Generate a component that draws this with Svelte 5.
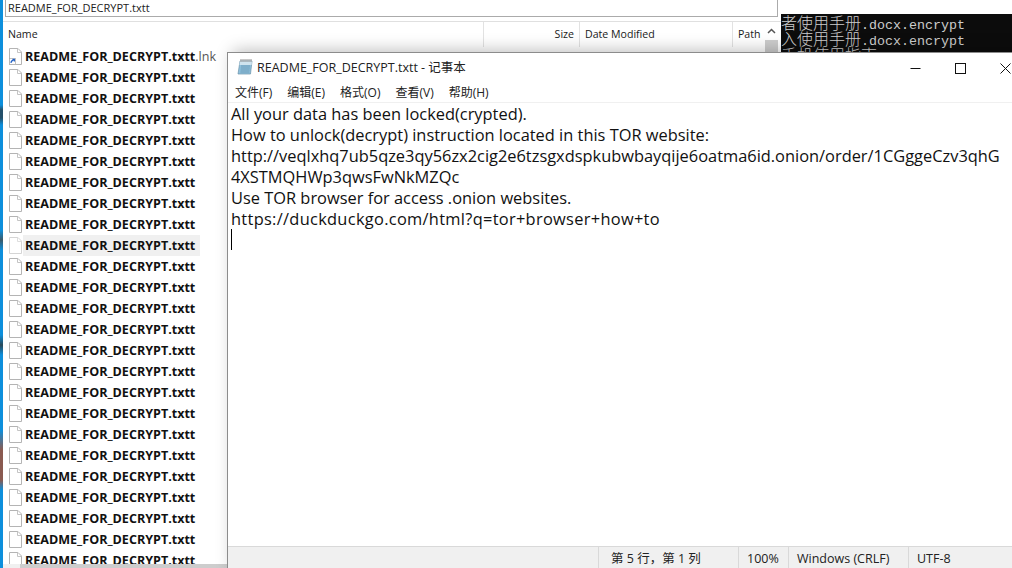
<script>
    const files = Array.from({ length: 25 }, (_, i) => ({
        ext: i === 0 ? ".lnk" : "",
        selected: i === 9,
    }));

    const lines = [
        "All your data has been locked(crypted).",
        "How to unlock(decrypt) instruction located in this TOR website:",
        "http://veqlxhq7ub5qze3qy56zx2cig2e6tzsgxdspkubwbayqije6oatma6id.onion/order/1CGggeCzv3qhG",
        "4XSTMQHWp3qwsFwNkMZQc",
        "Use TOR browser for access .onion websites.",
        "https://duckduckgo.com/html?q=tor+browser+how+to",
    ];

    const menus = ["文件(F)", "编辑(E)", "格式(O)", "查看(V)", "帮助(H)"];
</script>

<div class="desktop">
    <div class="wallpaper"></div>

    <section class="explorer">
        <div class="search">README_FOR_DECRYPT.txtt</div>
        <div class="columns">
            <div class="col name">Name</div>
            <div class="col size">Size</div>
            <div class="col date">Date Modified</div>
            <div class="col path">Path</div>
        </div>
        <div class="body">
            <ul class="list">
                {#each files as file, i}
                    <li class="row" class:selected={file.selected}>
                        <svg class="doc" width="13" height="17" viewBox="0 0 13 17">
                            <path d="M.5.5h8.5l3.5 3.5v12.5H.5z" fill="#fff" stroke="#b4b4b4" />
                            <path d="M8.5.5v4h4" fill="none" stroke="#c4c4c4" />
                            {#if i === 0}
                                <rect x=".5" y="10.5" width="6" height="6" fill="#fff" stroke="#a8a8a8" stroke-width=".7" />
                                <path d="M2 15c0-1.8.8-2.6 2.6-2.6M3.4 11.4h2v2" fill="none" stroke="#1f5fc4" stroke-width="1.1" />
                            {/if}
                        </svg>
                        <span class="fname"><b>README_FOR_DECRYPT.txtt</b>{file.ext}</span>
                        {#if i === 0}
                            <span class="fsize">1 KB</span>
                            <span class="fdate">2020/8/8 10:00</span>
                        {/if}
                    </li>
                {/each}
            </ul>
        </div>
        <div class="hbar"><div class="hthumb"></div></div>
        <div class="vbar">
            <div class="up">
                <svg width="9" height="6" viewBox="0 0 9 6"><path d="M1 5l3.5-3.5L8 5" fill="none" stroke="#555" stroke-width="1.5" /></svg>
            </div>
            <div class="vthumb"></div>
        </div>
    </section>

    <div class="console">
        <div>者使用手册<span>.docx.encrypt</span></div>
        <div>入使用手册<span>.docx.encrypt</span></div>
        <div>手机使用指南<span>.pdf.encrypt</span></div>
    </div>

    <section class="notepad">
        <header class="title">
            <svg width="16" height="17" viewBox="0 0 16 17">
                <path d="M3 3h12l-1.5 13H1z" fill="#8fc0dc" stroke="#6b93ab" stroke-width=".7" />
                <path d="M3 3h12l-.4 4H2.5z" fill="#cfe3ee" />
                <path d="M4 8h9M3.8 10h9M3.6 12h9M3.4 14h9" stroke="#5f8eaa" stroke-width=".7" />
                <path d="M4 1v3M6 1v3M8 1v3M10 1v3M12 1v3M14 1v3" stroke="#777" stroke-width=".8" />
            </svg>
            <span class="name-text">README_FOR_DECRYPT.txtt - 记事本</span>
            <div class="controls">
                <svg width="11" height="11" viewBox="0 0 11 11"><path d="M.5 5.5h10" stroke="#111" /></svg>
                <svg width="11" height="11" viewBox="0 0 11 11"><rect x=".5" y=".5" width="10" height="10" fill="none" stroke="#111" /></svg>
                <svg width="11" height="11" viewBox="0 0 11 11"><path d="M.5.5l10 10M10.5.5l-10 10" stroke="#111" /></svg>
            </div>
        </header>
        <nav class="menu">
            {#each menus as item}
                <span>{item}</span>
            {/each}
        </nav>
        <div class="text">
            {#each lines as line, i}
                <div class="line" class:wide={i === 5}>{line}</div>
            {/each}
            <div class="caret"></div>
        </div>
        <footer class="status">
            <div class="cell pos">第 5 行，第 1 列</div>
            <div class="cell zoom">100%</div>
            <div class="cell eol">Windows (CRLF)</div>
            <div class="cell enc">UTF-8</div>
        </footer>
    </section>
</div>

<style>
    :global(body) {
        margin: 0;
        overflow: hidden;
    }

    .desktop {
        position: relative;
        width: 1012px;
        height: 568px;
        overflow: hidden;
        background: #fff;
        font-family: "Open Sans", "Noto Sans CJK SC", sans-serif;
        color: #1a1a1a;
    }

    .wallpaper {
        position: absolute;
        left: 0;
        top: 0;
        width: 3px;
        height: 568px;
        background: linear-gradient(
            #0d8fdc 0 105px,
            #24506a 110px 118px,
            #0d8fdc 125px 230px,
            #3a5a6a 240px,
            #0d8fdc 250px 335px,
            #2a4a5a 345px,
            #0d8fdc 355px,
            #0d8fdc 430px,
            #8a5a50 450px 480px,
            #0d8fdc 490px
        );
    }

    /* explorer */
    .explorer {
        position: absolute;
        left: 3px;
        top: 0;
        width: 778px;
        height: 568px;
        display: flex;
        flex-direction: column;
        background: #fff;
    }

    .search {
        height: 17px;
        margin: 0 3px 0 2px;
        padding: 0 0 0 2px;
        box-sizing: border-box;
        border: 1px solid #ababab;
        border-top: 0;
        line-height: 15px;
        font-size: 11px;
        color: #222;
        flex: none;
    }

    .columns {
        display: flex;
        height: 25px;
        margin-top: 4px;
        border-top: 1px solid #e0e0e0;
        font-size: 10.6px;
        line-height: 24px;
        flex: none;
    }

    .col {
        box-sizing: border-box;
        border-right: 1px solid #e2e2e2;
    }

    .name {
        width: 481px;
        padding-left: 5px;
    }

    .size {
        width: 96px;
        padding-right: 5px;
        text-align: right;
    }

    .date {
        width: 153px;
        padding-left: 5px;
    }

    .path {
        width: 32px;
        padding-left: 5px;
        border-right: 0;
    }

    .body {
        flex: 1;
        min-height: 0;
        overflow: hidden;
    }

    .list {
        list-style: none;
        margin: -1px 0 0;
        padding: 0;
    }

    .row {
        position: relative;
        display: flex;
        align-items: center;
        height: 21px;
        font-size: 12.55px;
        color: #555;
    }

    .doc {
        margin-left: 6px;
        flex: none;
    }

    .row.selected .doc {
        opacity: 0.55;
    }

    .fname {
        margin-left: 1px;
        padding-left: 2px;
        width: 177px;
        box-sizing: border-box;
        white-space: nowrap;
        line-height: 21px;
    }

    .row.selected .fname {
        background: #f0f0f0;
    }

    .fname b {
        color: #111;
        font-weight: 700;
    }

    .fsize {
        position: absolute;
        left: 549px;
        font-size: 11px;
        color: #333;
    }

    .fdate {
        position: absolute;
        left: 582px;
        font-size: 11px;
        color: #333;
    }

    /* scrollbars */
    .vbar {
        position: absolute;
        right: 3px;
        top: 22px;
        bottom: 4px;
        width: 13px;
        display: flex;
        flex-direction: column;
    }

    .up {
        height: 18px;
        display: flex;
        align-items: center;
        justify-content: center;
        background: #fff;
    }

    .vthumb {
        flex: 1;
        background: #cdcdcd;
    }

    .hbar {
        height: 4px;
        background: #f0f0f0;
        flex: none;
    }

    .hthumb {
        width: 208px;
        margin-left: 17px;
        height: 100%;
        background: #cdcdcd;
    }

    /* console behind the notepad */
    .console {
        position: absolute;
        left: 781px;
        top: 14px;
        width: 231px;
        height: 39px;
        overflow: hidden;
        background: #0c0c0c;
        color: #ccc;
        font-family: "Noto Sans CJK SC", sans-serif;
        font-weight: 300;
        font-size: 16px;
        line-height: 16px;
    }

    .console div {
        height: 16px;
        white-space: nowrap;
    }

    .console span {
        font-family: "Liberation Mono", monospace;
        font-size: 13.33px;
    }

    /* notepad */
    .notepad {
        position: absolute;
        left: 227px;
        top: 52px;
        width: 800px;
        height: 520px;
        box-sizing: border-box;
        display: flex;
        flex-direction: column;
        background: #fff;
        border: 1px solid #8c8c8c;
        box-shadow: 6px -1px 16px rgba(0, 0, 0, 0.28);
    }

    .title {
        position: relative;
        display: flex;
        align-items: center;
        height: 27px;
        padding: 0 0 2px 9px;
        flex: none;
    }

    .name-text {
        margin-left: 4px;
        font-size: 12.5px;
        color: #222;
    }

    .controls {
        position: absolute;
        left: 682px;
        top: 10px;
        display: flex;
        gap: 34px;
    }

    .menu {
        display: flex;
        gap: 15px;
        height: 20px;
        padding-left: 7px;
        align-items: center;
        font-size: 12px;
        color: #222;
        border-bottom: 1px solid #f0f0f0;
        flex: none;
    }

    .text {
        flex: 1;
        padding: 0 0 0 3px;
        font-size: 16.4px;
        line-height: 21px;
        color: #111;
    }

    .line {
        white-space: nowrap;
    }

    .line.wide {
        letter-spacing: 0.3px;
    }

    .caret {
        width: 1px;
        height: 21px;
        background: #000;
    }

    .status {
        display: flex;
        height: 25px;
        padding-left: 370px;
        flex: none;
        background: #f0f0f0;
        border-top: 1px solid #d9d9d9;
        font-size: 12.5px;
        line-height: 24px;
        color: #222;
        box-sizing: border-box;
    }

    .cell {
        box-sizing: border-box;
        height: 21px;
        padding-left: 8px;
        border-left: 1px solid #d9d9d9;
    }

    .pos {
        width: 140px;
        padding-left: 12px;
    }

    .zoom {
        width: 50px;
    }

    .eol {
        width: 120px;
    }

    .enc {
        width: 100px;
    }
</style>
